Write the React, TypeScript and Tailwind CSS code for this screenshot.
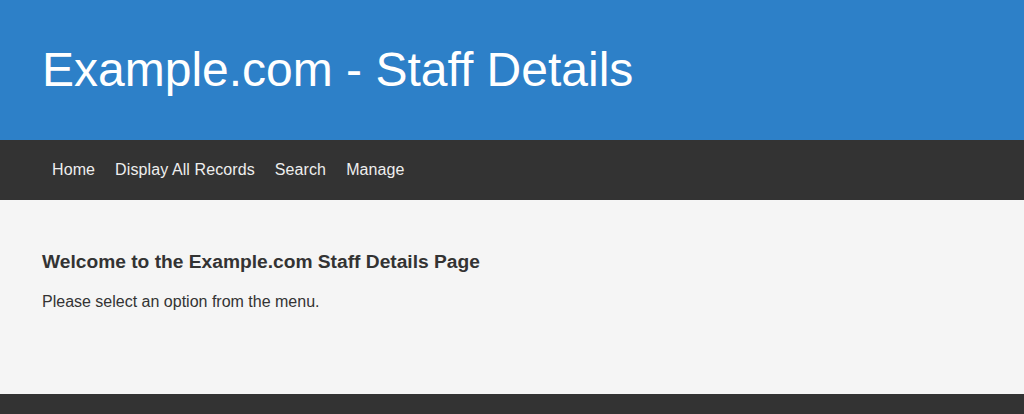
export default function App() {
  const links = ["Home", "Display All Records", "Search", "Manage"];
  return (
    <div className="min-h-screen flex flex-col font-['Liberation_Sans',Arial,sans-serif]">
      <header className="bg-[#2d80c8] h-[140px] flex items-center px-[42px]">
        <h1 className="text-white text-[48px] leading-none font-normal">Example.com - Staff Details</h1>
      </header>
      <nav className="bg-[#333333] h-[60px] flex items-center px-[42px]">
        {links.map((l) => (
          <a key={l} href="#" className="text-[#eeeeee] text-[16px] px-[10px] tracking-[0.1px]">
            {l}
          </a>
        ))}
      </nav>
      <main className="bg-[#f5f5f5] h-[194px] px-[42px] pt-[50px] text-[#333333]">
        <h2 className="text-[19.2px] font-bold leading-[24px]">Welcome to the Example.com Staff Details Page</h2>
        <p className="text-[16px] mt-[16px]">Please select an option from the menu.</p>
      </main>
      <footer className="bg-[#333333] flex-1 min-h-[20px]"></footer>
    </div>
  );
}
